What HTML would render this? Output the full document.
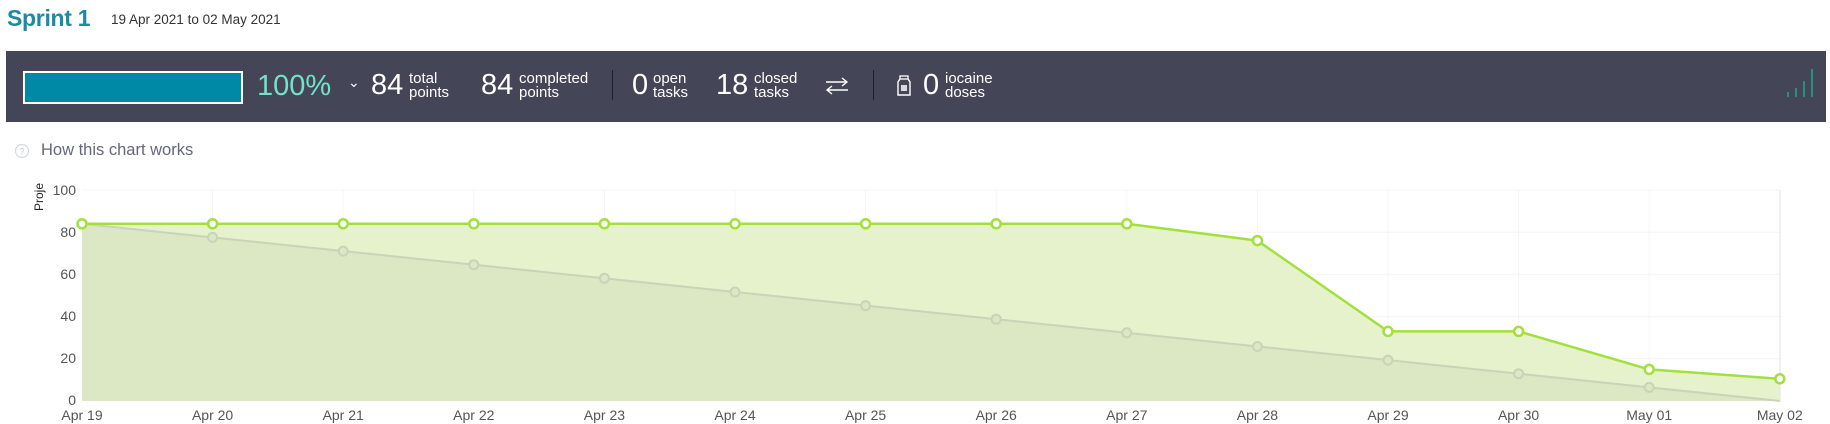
<!DOCTYPE html>
<html><head><meta charset="utf-8"><style>
body{margin:0;width:1830px;height:424px;background:#fff;font-family:"Liberation Sans",sans-serif;position:relative;overflow:hidden}
.a{position:absolute;white-space:nowrap}
.w{color:#fff}
.big{font-size:29px;line-height:30px}
.sm{font-size:15px;line-height:14px}
</style></head><body>
<div class="a" style="left:7px;top:5px;font-size:23px;color:#1b8aa3;font-weight:bold;letter-spacing:-0.3px">Sprint 1</div>
<div class="a" style="left:111px;top:12px;font-size:13.5px;color:#333">19 Apr 2021 to 02 May 2021</div>
<div class="a" style="left:6px;top:51px;width:1820px;height:71px;background:#444556"></div>
<div class="a" style="left:23px;top:71px;width:216px;height:29px;border:2px solid #fff;background:#0089a7"></div>
<div class="a big" style="left:257px;top:71px;color:#72e2c9;font-size:29px">100%</div>
<div class="a w" style="left:348px;top:74px;font-size:14px">&#8964;</div>
<div class="a w big" style="left:371px;top:70px">84</div>
<div class="a w sm" style="left:409px;top:72px">total<br>points</div>
<div class="a w big" style="left:481px;top:70px">84</div>
<div class="a w sm" style="left:519px;top:72px">completed<br>points</div>
<div class="a" style="left:612px;top:70px;width:1px;height:30px;background:#1f1f28"></div>
<div class="a w big" style="left:632px;top:70px">0</div>
<div class="a w sm" style="left:653px;top:72px">open<br>tasks</div>
<div class="a w big" style="left:716px;top:70px">18</div>
<div class="a w sm" style="left:754px;top:72px">closed<br>tasks</div>
<svg class="a" style="left:825px;top:77px" width="24" height="18"><g fill="none" stroke="#fff" stroke-width="1.4"><path d="M1 5 H22 M17 1 L22 5 L17 9"/><path d="M23 13 H2 M7 9 L2 13 L7 17"/></g></svg>
<div class="a" style="left:873px;top:70px;width:1px;height:30px;background:#1f1f28"></div>
<svg class="a" style="left:896px;top:75px" width="16" height="22" viewBox="0 0 16 22"><rect x="4" y="1" width="8" height="3" fill="none" stroke="#fff" stroke-width="1.3"/><path d="M4 4 L2 7 V20 H14 V7 L12 4" fill="none" stroke="#fff" stroke-width="1.4"/><rect x="5" y="10" width="6" height="6" fill="#fff" opacity=".8"/></svg>
<div class="a w big" style="left:923px;top:70px">0</div>
<div class="a w sm" style="left:945px;top:72px">iocaine<br>doses</div>
<svg class="a" style="left:1785px;top:68px" width="30" height="30"><g stroke="#1fa38a" stroke-width="1.6"><line x1="3" y1="29" x2="3" y2="24"/><line x1="11" y1="29" x2="11" y2="20"/><line x1="19" y1="29" x2="19" y2="13"/><line x1="27" y1="29" x2="27" y2="1"/></g></svg>
<svg class="a" style="left:14px;top:143px" width="16" height="16"><circle cx="8" cy="8" r="6.5" fill="none" stroke="#d5d8e6" stroke-width="1.2"/><text x="8" y="11.5" font-size="9" text-anchor="middle" fill="#c5c9d8" font-family="Liberation Sans">?</text></svg>
<div class="a" style="left:41px;top:141px;font-size:16.5px;color:#666778">How this chart works</div>
<svg class="a" style="left:0;top:0" width="1830" height="424">
<g stroke="#f4f4f4" stroke-width="1">
<line x1="82" y1="190" x2="1780" y2="190"/><line x1="82" y1="232.2" x2="1780" y2="232.2"/><line x1="82" y1="274.4" x2="1780" y2="274.4"/><line x1="82" y1="316.6" x2="1780" y2="316.6"/><line x1="82" y1="358.8" x2="1780" y2="358.8"/>
<line x1="212.6" y1="190" x2="212.6" y2="401"/><line x1="343.2" y1="190" x2="343.2" y2="401"/><line x1="473.8" y1="190" x2="473.8" y2="401"/><line x1="604.4" y1="190" x2="604.4" y2="401"/><line x1="735" y1="190" x2="735" y2="401"/><line x1="865.6" y1="190" x2="865.6" y2="401"/><line x1="996.2" y1="190" x2="996.2" y2="401"/><line x1="1126.8" y1="190" x2="1126.8" y2="401"/><line x1="1257.4" y1="190" x2="1257.4" y2="401"/><line x1="1388" y1="190" x2="1388" y2="401"/><line x1="1518.6" y1="190" x2="1518.6" y2="401"/><line x1="1649.2" y1="190" x2="1649.2" y2="401"/>
</g>
<line x1="1780" y1="190" x2="1780" y2="401" stroke="#dfe2f0"/>
<path d="M82 223.8 L1126.8 223.8 L1257.4 240.6 L1388 331.4 L1518.6 331.4 L1649.2 369.4 L1779.8 378.8 L1779.8 401 L82 401Z" fill="#e6f2cb"/>
<path d="M82 223.8 L1779.8 401 L82 401Z" fill="#dce7c3"/>
<polyline points="82,223.8 1779.8,401" fill="none" stroke="#c9d3b9" stroke-width="2"/>
<g fill="#dce7c3" stroke="#c9d3b9" stroke-width="2">
<circle cx="212.6" cy="237.4" r="4.5"/><circle cx="343.2" cy="251.1" r="4.5"/><circle cx="473.8" cy="264.7" r="4.5"/><circle cx="604.4" cy="278.3" r="4.5"/><circle cx="735" cy="292" r="4.5"/><circle cx="865.6" cy="305.6" r="4.5"/><circle cx="996.2" cy="319.2" r="4.5"/><circle cx="1126.8" cy="332.8" r="4.5"/><circle cx="1257.4" cy="346.5" r="4.5"/><circle cx="1388" cy="360.1" r="4.5"/><circle cx="1518.6" cy="373.7" r="4.5"/><circle cx="1649.2" cy="387.4" r="4.5"/>
</g>
<polyline points="82,223.8 1126.8,223.8 1257.4,240.6 1388,331.4 1518.6,331.4 1649.2,369.4 1779.8,378.8" fill="none" stroke="#a2e03c" stroke-width="2.5"/>
<g fill="#fff" stroke="#a2e03c" stroke-width="2.5">
<circle cx="82" cy="223.8" r="4.5"/><circle cx="212.6" cy="223.8" r="4.5"/><circle cx="343.2" cy="223.8" r="4.5"/><circle cx="473.8" cy="223.8" r="4.5"/><circle cx="604.4" cy="223.8" r="4.5"/><circle cx="735" cy="223.8" r="4.5"/><circle cx="865.6" cy="223.8" r="4.5"/><circle cx="996.2" cy="223.8" r="4.5"/><circle cx="1126.8" cy="223.8" r="4.5"/><circle cx="1257.4" cy="240.6" r="4.5"/><circle cx="1388" cy="331.4" r="4.5"/><circle cx="1518.6" cy="331.4" r="4.5"/><circle cx="1649.2" cy="369.4" r="4.5"/><circle cx="1779.8" cy="378.8" r="4.5"/>
</g>
<g font-family="Liberation Sans" font-size="14" fill="#555" text-anchor="end">
<text x="76" y="195">100</text><text x="76" y="237">80</text><text x="76" y="279">60</text><text x="76" y="321">40</text><text x="76" y="363">20</text><text x="76" y="405">0</text>
</g>
<text transform="translate(43,211) rotate(-90)" font-family="Liberation Sans" font-size="12" fill="#222">Proje</text>
<g font-family="Liberation Sans" font-size="14" fill="#555" text-anchor="middle">
<text x="82" y="420">Apr 19</text><text x="212.6" y="420">Apr 20</text><text x="343.2" y="420">Apr 21</text><text x="473.8" y="420">Apr 22</text><text x="604.4" y="420">Apr 23</text><text x="735" y="420">Apr 24</text><text x="865.6" y="420">Apr 25</text><text x="996.2" y="420">Apr 26</text><text x="1126.8" y="420">Apr 27</text><text x="1257.4" y="420">Apr 28</text><text x="1388" y="420">Apr 29</text><text x="1518.6" y="420">Apr 30</text><text x="1649.2" y="420">May 01</text><text x="1779.8" y="420">May 02</text>
</g>
</svg>
</body></html>
